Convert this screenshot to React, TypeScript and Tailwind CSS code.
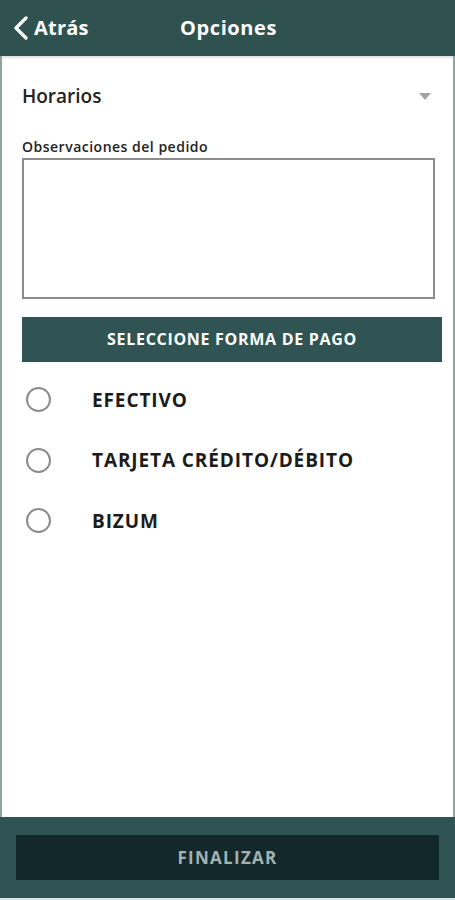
import { useState } from "react";

const METODOS = ["EFECTIVO", "TARJETA CRÉDITO/DÉBITO", "BIZUM"];

export default function App() {
  const [pago, setPago] = useState<string | null>(null);

  return (
    <div
      className="flex h-[900px] w-[455px] flex-col overflow-hidden bg-white"
      style={{ fontFamily: '"Open Sans", "Liberation Sans", sans-serif' }}
    >
      {/* Header */}
      <div className="flex h-[56px] shrink-0 items-center bg-[#2f5251] text-white">
        <button className="flex w-[160px] items-center pl-[12px]">
          <svg width="18" height="24" viewBox="0 0 18 24" fill="none">
            <path d="M14 2 L4 12 L14 22" stroke="white" strokeWidth="3.2" strokeLinecap="round" strokeLinejoin="round" />
          </svg>
          <span className="ml-[4px] text-[20px] font-bold tracking-[0.2px]">Atrás</span>
        </button>
        <h1 className="ml-[20px] text-[20px] font-bold tracking-[0.6px]">Opciones</h1>
      </div>

      {/* Content */}
      <div className="flex flex-1 flex-col border-x-2 border-[#8fa3a1] shadow-[inset_0_3px_2px_-1px_rgba(0,0,0,0.12)]">
        <div className="flex items-center justify-between pl-[20px] pr-[22px] pt-[26px]">
          <span className="text-[19px] font-semibold text-[#222]">Horarios</span>
          <svg width="12" height="7" viewBox="0 0 12 7">
            <path d="M0 0 H12 L6 7 Z" fill="#a3a3a3" />
          </svg>
        </div>

        <label className="mt-[25px] pl-[20px] text-[14px] font-semibold tracking-[0.5px] text-[#222]">
          Observaciones del pedido
        </label>
        <textarea className="mx-[20px] mt-[1px] h-[141px] w-[413px] resize-none border-2 border-[#8c8c8c] outline-none" />

        <div className="ml-[20px] mr-[11px] mt-[18px] flex h-[45px] items-center justify-center bg-[#2f5453] text-[16px] font-bold tracking-[0.7px] text-white">
          SELECCIONE FORMA DE PAGO
        </div>

        <div className="mt-[8px] flex flex-col">
          {METODOS.map((m) => (
            <button
              key={m}
              onClick={() => setPago(m)}
              className="flex h-[60.5px] items-center pl-[24px] text-left"
            >
              <span className="flex h-[25px] w-[25px] items-center justify-center rounded-full border-2 border-[#8a8a8a]">
                {pago === m && <span className="h-[13px] w-[13px] rounded-full bg-[#2f5453]" />}
              </span>
              <span className="ml-[41px] text-[19px] font-bold tracking-[0.9px] text-[#1b1b1b]">{m}</span>
            </button>
          ))}
        </div>
      </div>

      {/* Footer */}
      <div className="flex h-[81px] shrink-0 items-start bg-[#2f5453] px-[16px] pt-[18px]">
        <button className="flex h-[45px] w-full items-center justify-center bg-[#13282a] text-[17px] font-bold tracking-[1.3px] text-[#a3b2b0]">
          FINALIZAR
        </button>
      </div>
      <div className="h-[2px] shrink-0 bg-[#dfe5e4]" />
    </div>
  );
}
